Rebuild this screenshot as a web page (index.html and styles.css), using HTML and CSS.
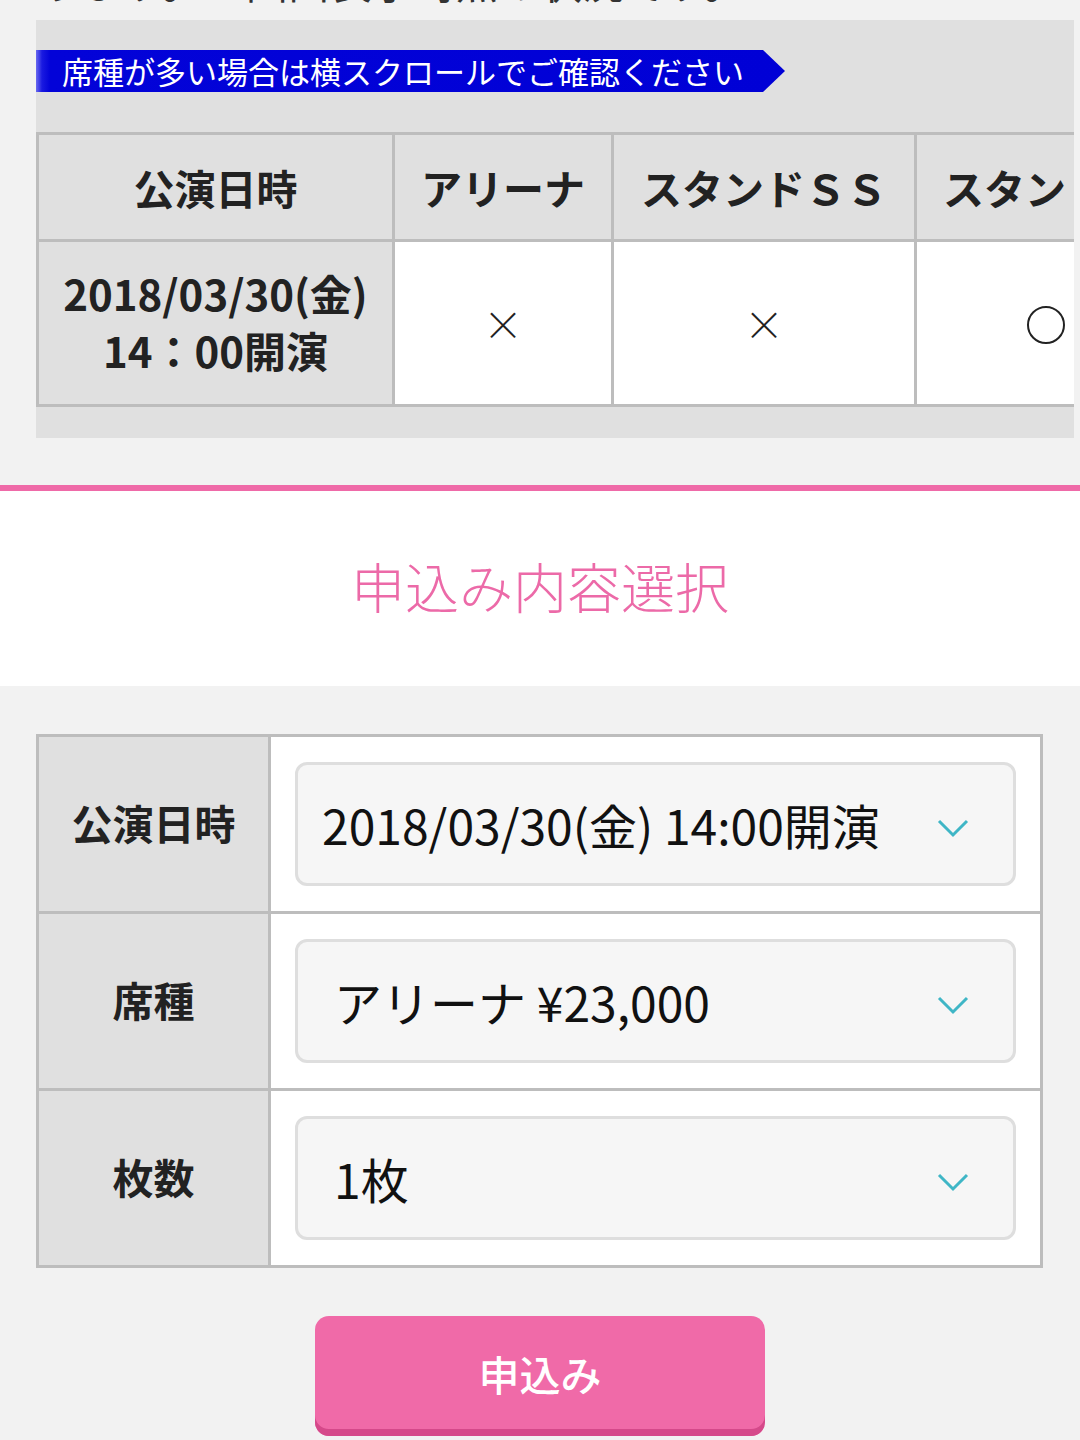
FILE: index.html
```html
<!DOCTYPE html>
<html lang="ja">
<head>
<meta charset="utf-8">
<title>申込み内容選択</title>
<link rel="stylesheet" href="styles.css">
</head>
<body>
<div class="page">
  <p class="notice">ります。※画面表示時点の状況です。</p>

  <div class="status-box">
    <div class="banner">席種が多い場合は横スクロールでご確認ください</div>
    <div class="scroll">
      <table class="status-table">
        <thead>
          <tr>
            <th class="c-date">公演日時</th>
            <th class="c-arena">アリーナ</th>
            <th class="c-ss">スタンドＳＳ</th>
            <th class="c-s">スタンドＳ</th>
          </tr>
        </thead>
        <tbody>
          <tr>
            <th class="date-cell">2018/03/30(金)<br>14：00開演</th>
            <td>×</td>
            <td>×</td>
            <td class="ok"><span class="circle"></span></td>
          </tr>
        </tbody>
      </table>
    </div>
  </div>

  <section class="title-band">
    <h2 class="title">申込み内容選択</h2>
  </section>

  <div class="form-area">
    <table class="form-table">
      <tr>
        <th>公演日時</th>
        <td>
          <div class="select select-date">
            <span class="select-text">2018/03/30(金) 14:00開演</span>
            <svg class="chev" width="32" height="20" viewBox="0 0 32 20"><path d="M2 3 L16 17 L30 3" fill="none" stroke="#3fb6c6" stroke-width="3"/></svg>
          </div>
        </td>
      </tr>
      <tr>
        <th>席種</th>
        <td>
          <div class="select">
            <span class="select-text">アリーナ ¥23,000</span>
            <svg class="chev" width="32" height="20" viewBox="0 0 32 20"><path d="M2 3 L16 17 L30 3" fill="none" stroke="#3fb6c6" stroke-width="3"/></svg>
          </div>
        </td>
      </tr>
      <tr>
        <th>枚数</th>
        <td>
          <div class="select">
            <span class="select-text">1枚</span>
            <svg class="chev" width="32" height="20" viewBox="0 0 32 20"><path d="M2 3 L16 17 L30 3" fill="none" stroke="#3fb6c6" stroke-width="3"/></svg>
          </div>
        </td>
      </tr>
    </table>

    <div class="btn-row">
      <button class="apply-btn">申込み</button>
    </div>
  </div>
</div>
</body>
</html>
```

FILE: styles.css
```css
html, body {
  margin: 0;
  padding: 0;
}
body {
  background: #f2f2f2;
  font-family: "Noto Sans CJK JP", "Noto Sans", sans-serif;
  color: #222;
  width: 1080px;
  height: 1440px;
  overflow: hidden;
}
.page {
  width: 1080px;
}
.notice {
  margin: -44px 0 0 0;
  padding-left: 40px;
  height: 64px;
  font-size: 42px;
  line-height: 50px;
  color: #333;
  white-space: nowrap;
  overflow: hidden;
}

/* status box */
.status-box {
  margin-left: 36px;
  width: 1038px;
  background: #e0e0e0;
  padding: 30px 0 31px 0;
  overflow: hidden;
}
.banner {
  width: 749px;
  height: 42px;
  box-sizing: border-box;
  padding-left: 26px;
  background: linear-gradient(to right, #6a6af0 0px, #1a1ae0 6px, #0303d8 14px, #0000d6 100%);
  clip-path: polygon(0 0, 727px 0, 749px 21px, 727px 42px, 0 42px);
  color: #fff;
  font-size: 31px;
  line-height: 42px;
  letter-spacing: 0;
  white-space: nowrap;
}
.scroll {
  margin-top: 40px;
  overflow: hidden;
}
.status-table {
  border-collapse: collapse;
  table-layout: fixed;
  width: 1220px;
}
.status-table th,
.status-table td {
  border: 3px solid #bdbdbd;
  padding: 0;
  text-align: center;
  vertical-align: middle;
}
.status-table thead th {
  height: 104px;
  background: #e0e0e0;
  font-size: 41px;
  font-weight: 700;
  color: #222;
  white-space: nowrap;
  overflow: hidden;
}
.c-date { width: 353px; }
.c-arena { width: 216px; }
.c-ss { width: 300px; }
.c-s { width: 340px; }
.status-table thead th.c-s { text-align: left; padding-left: 26px; }
.status-table tbody th.date-cell {
  height: 158px;
  background: #e0e0e0;
  font-size: 42px;
  font-weight: 700;
  line-height: 57px;
  color: #222;
  padding-bottom: 4px;
}
.status-table tbody td {
  background: #fff;
  font-size: 40px;
  font-weight: 300;
  color: #222;
}
.status-table tbody td.ok {
  text-align: left;
  padding-left: 110px;
}
.circle {
  display: inline-block;
  width: 34px;
  height: 34px;
  border: 2px solid #222;
  border-radius: 50%;
  vertical-align: middle;
  margin-top: -8px;
}

/* title */
.title-band {
  margin-top: 47px;
  border-top: 6px solid #ef6aa8;
  background: #fff;
  height: 195px;
  display: flex;
  align-items: center;
  justify-content: center;
}
.title {
  margin: 0;
  font-size: 54px;
  font-weight: 300;
  color: #ec6aa8;
  letter-spacing: 0;
  padding-bottom: 6px;
}

/* form */
.form-area {
  padding: 48px 0 0 36px;
}
.form-table {
  border-collapse: collapse;
  width: 1007px;
  table-layout: fixed;
}
.form-table th,
.form-table td {
  border: 3px solid #bdbdbd;
  height: 170px;
  padding: 0;
  vertical-align: middle;
}
.form-table th {
  width: 229px;
  background: #e0e0e0;
  font-size: 41px;
  font-weight: 700;
  color: #222;
  text-align: center;
  padding-bottom: 4px;
}
.form-table td {
  background: #fff;
  padding: 0 24px 0 24px;
}
.select {
  height: 124px;
  box-sizing: border-box;
  border: 3px solid #dedede;
  border-radius: 12px;
  background: #f6f6f6;
  display: flex;
  align-items: center;
  padding: 0 44px 0 36px;
}
.select-date {
  padding-left: 24px;
}
.select-text {
  flex: 1;
  font-size: 48px;
  font-weight: 400;
  color: #111;
  white-space: nowrap;
  line-height: 1;
}
.chev {
  display: block;
  margin-top: 8px;
}

.btn-row {
  display: flex;
  justify-content: center;
  padding: 48px 0 0 0;
  margin-left: -36px;
}
.apply-btn {
  width: 450px;
  height: 120px;
  border: 0;
  border-radius: 14px;
  background: #f06aa8;
  box-shadow: inset 0 -7px 0 #d5498a;
  color: #fff;
  font-family: "Noto Sans CJK JP", "Noto Sans", sans-serif;
  font-size: 41px;
  font-weight: 500;
  padding: 0 0 6px 0;
}
```
